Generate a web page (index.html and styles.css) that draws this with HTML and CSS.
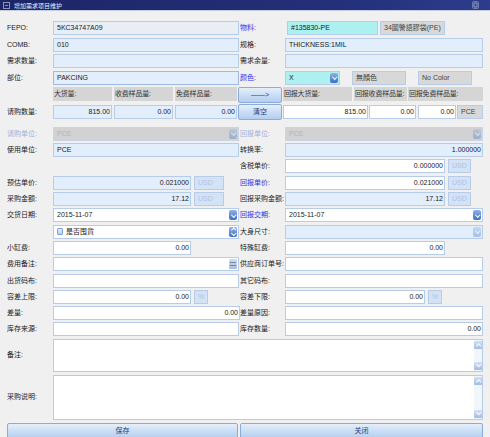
FILE: index.html
```html
<!DOCTYPE html>
<html lang="zh-CN">
<head>
    <meta charset="UTF-8">
    <title>增加需求项目维护</title>
    <link rel="stylesheet" href="styles.css">
</head>
<body>
<div class="window">
    <div class="titlebar">
        <svg class="ticon" width="7" height="7" viewBox="0 0 7 7"><rect x="0.5" y="0.5" width="6" height="6" fill="none" stroke="#8b93b8"/><path d="M2 3.5h3" stroke="#8b93b8"/></svg>
        <span class="title">增加需求项目维护</span>
        <svg class="tbtn" width="7" height="8" viewBox="0 0 7 8"><rect x="0.5" y="0.5" width="6" height="7" rx="1" fill="#3b4a8e" stroke="#6f7bb0"/><rect x="2" y="2" width="3" height="4" fill="none" stroke="#9aa3cc" stroke-width="0.8"/></svg>
    </div>

    <div class="form">
        <!-- top block -->
        <div class="row top">
            <span class="lbl">FEPO:</span>
            <div class="box fepo">5KC34747A09</div>
            <span class="lbl blue">物料:</span>
            <div class="pair">
                <div class="box cyan mat">#135830-PE</div>
                <div class="box gray grow">34圖警語膠袋(PE)</div>
            </div>
        </div>
        <div class="row top">
            <span class="lbl">COMB:</span>
            <div class="box">010</div>
            <span class="lbl">规格:</span>
            <div class="box">THICKNESS:1MIL</div>
        </div>
        <div class="row top">
            <span class="lbl">需求数量:</span>
            <div class="box"></div>
            <span class="lbl">需求余量:</span>
            <div class="box"></div>
        </div>
        <div class="row top">
            <span class="lbl">部位:</span>
            <div class="box focus">PAKCING</div>
            <span class="lbl blue">颜色:</span>
            <div class="colors">
                <div class="box cyan col-x">X<span class="ic dd"></span></div>
                <div class="box gray col-n">無顏色</div>
                <div class="box gray col-n">No Color</div>
            </div>
        </div>

        <!-- quantity block -->
        <div class="qrow head">
            <span class="lbl"></span>
            <div class="hd w59">大货量:</div>
            <div class="hd w59">收费样品量:</div>
            <div class="hd w62">免费样品量:</div>
            <div class="btn small">——&gt;</div>
            <div class="hd w69">回报大货量:</div>
            <div class="hd w53">回报收费样品量:</div>
            <div class="hd w75">回报免费样品量:</div>
        </div>
        <div class="qrow qty">
            <span class="lbl">请购数量:</span>
            <div class="box num w59">815.00</div>
            <div class="box num w59">0.00</div>
            <div class="box num w62">0.00</div>
            <div class="btn small">清空</div>
            <div class="box white num w85">815.00</div>
            <div class="box white num w47">0.00</div>
            <div class="box white num w38">0.00</div>
            <div class="box gray w26">PCE</div>
        </div>

        <!-- unit / price block -->
        <div class="row">
            <span class="lbl faded">请购单位:</span>
            <div class="box off">PCE<span class="ic dd dim"></span></div>
            <span class="lbl faded">回报单位:</span>
            <div class="box off">PCE<span class="ic dd dim"></span></div>
        </div>
        <div class="row">
            <span class="lbl">使用单位:</span>
            <div class="box">PCE</div>
            <span class="lbl">转换率:</span>
            <div class="box num">1.000000</div>
        </div>
        <div class="row">
            <span class="lbl"></span>
            <div></div>
            <span class="lbl">含税单价:</span>
            <div class="pair">
                <div class="box white num r159">0.000000</div>
                <div class="box cur grow">USD</div>
            </div>
        </div>
        <div class="row">
            <span class="lbl">预估单价:</span>
            <div class="pair">
                <div class="box num l138">0.021000</div>
                <div class="box cur usd">USD</div>
            </div>
            <span class="lbl blue">回报单价:</span>
            <div class="pair">
                <div class="box white num r159">0.021000</div>
                <div class="box cur grow">USD</div>
            </div>
        </div>
        <div class="row">
            <span class="lbl">采购金额:</span>
            <div class="pair">
                <div class="box num l138">17.12</div>
                <div class="box cur usd">USD</div>
            </div>
            <span class="lbl">回报采购金额:</span>
            <div class="pair">
                <div class="box num r159">17.12</div>
                <div class="box cur grow">USD</div>
            </div>
        </div>
        <div class="row">
            <span class="lbl">交货日期:</span>
            <div class="box white">2015-11-07<span class="ic dd"></span></div>
            <span class="lbl blue">回报交期:</span>
            <div class="box white">2015-11-07<span class="ic dd"></span></div>
        </div>
        <div class="row">
            <span class="lbl"></span>
            <div class="box white"><span class="chk"></span>是否囤貨<span class="ic spin"></span></div>
            <span class="lbl">大身尺寸:</span>
            <div class="box"><span class="ic dd dim"></span></div>
        </div>

        <!-- misc block -->
        <div class="row">
            <span class="lbl">小缸费:</span>
            <div><div class="box white num l138">0.00</div></div>
            <span class="lbl">特殊缸费:</span>
            <div><div class="box white num r159">0.00</div></div>
        </div>
        <div class="row">
            <span class="lbl">费用备注:</span>
            <div class="box white"><span class="ic dots"></span></div>
            <span class="lbl">供应商订单号:</span>
            <div class="box white"></div>
        </div>
        <div class="row">
            <span class="lbl">出货码布:</span>
            <div class="box white"></div>
            <span class="lbl">其它码布:</span>
            <div class="box white"></div>
        </div>
        <div class="row">
            <span class="lbl">容差上限:</span>
            <div class="pair">
                <div class="box white num l138">0.00</div>
                <div class="box cur grow">%</div>
            </div>
            <span class="lbl">容差下限:</span>
            <div class="pair">
                <div class="box white num r139">0.00</div>
                <div class="box cur grow">%</div>
            </div>
        </div>
        <div class="row">
            <span class="lbl">差量:</span>
            <div class="box white num wide">0.00</div>
            <span class="lbl">差量原因:</span>
            <div class="box white"></div>
        </div>
        <div class="row">
            <span class="lbl">库存来源:</span>
            <div class="box white"></div>
            <span class="lbl">库存数量:</span>
            <div class="box white num">0.00</div>
        </div>

        <!-- notes -->
        <div class="note n1">
            <span class="lbl">备注:</span>
            <div class="area"><div class="sb"><span class="ic up"></span><span class="ic dn"></span></div></div>
        </div>
        <div class="note n2">
            <span class="lbl">采购说明:</span>
            <div class="area"><div class="sb"><span class="ic up"></span><span class="ic dn"></span></div></div>
        </div>

        <div class="actions">
            <div class="btn">保存</div>
            <div class="btn">关闭</div>
        </div>
    </div>
</div>
</body>
</html>
```

FILE: styles.css
```css
* {
    box-sizing: border-box;
}
body {
    margin: 0;
    background-color: #f0f0f0;
    font-family: "Liberation Sans", "Noto Sans CJK SC", sans-serif;
    font-size: 7px;
    color: #1a1a1a;
}
.window {
    width: 490px;
    height: 437px;
    overflow: hidden;
    background-color: #f0f0f0;
}
.titlebar {
    height: 11px;
    display: flex;
    align-items: center;
    padding: 0 3px;
    background: linear-gradient(to right, #1c2566, #24307a 70%, #2d3c8c);
    border-bottom: 1px solid #c5cddc;
    color: #e8ecf8;
    font-size: 6px;
}
.ticon {
    margin-right: 4px;
}
.title {
    flex: 1;
}
.tbtn {
    margin-right: 8px;
}
.form {
    padding: 10px 7px 0 7px;
}

/* rows */
.row {
    display: grid;
    grid-template-columns: 46px 187px 45px 198px;
    height: 14px;
    margin-bottom: 2.3px;
}
.row.top {
    margin-bottom: 2.6px;
}
.row > .box:nth-child(2) {
    width: 186px;
}
.lbl {
    line-height: 14px;
    white-space: nowrap;
}
.blue {
    color: #2e32e6;
}
.faded {
    color: #a3b1dc;
}
.qrow {
    display: flex;
    height: 14px;
}
.qrow > .lbl {
    width: 46px;
    flex: none;
}
.head {
    margin-bottom: 4px;
}
.qty {
    margin-bottom: 7.5px;
}
.pair {
    display: flex;
    gap: 3px;
}
.grow {
    flex: 1;
}

/* fields */
.box {
    position: relative;
    height: 14px;
    border: 1px solid #b7cce9;
    background-color: #e2eefb;
    padding: 0 3px;
    line-height: 12px;
    white-space: nowrap;
    overflow: hidden;
    flex: none;
}
.fepo {
    background-color: #e9eef5;
}
.focus {
    border-color: #9fbbe3;
}
.white {
    background-color: #ffffff;
}
.cyan {
    background-color: #adf0f0;
}
.gray {
    background-color: #d8d8d8;
    color: #444;
}
.off {
    background-color: #d2d2d2;
    color: #b5b5b5;
    border-color: #c8d4e6;
}
.cur {
    background-color: #d3e2f5;
    color: #aec3e3;
}
.num {
    text-align: right;
    padding-right: 1px;
}
.mat {
    width: 91px;
    margin-left: 2px;
}
.pair .mat + .box {
    margin-left: -1px;
}
.colors {
    display: flex;
    gap: 12px;
}
.col-x {
    width: 55px;
}
.col-n {
    width: 54px;
}
.l138 {
    width: 138px;
}
.usd {
    width: 30px;
}
.r159 {
    width: 160px;
}
.r139 {
    width: 140px;
}
.wide {
    width: 187px !important;
}
.w26 { width: 26px; }
.w38 { width: 38px; margin-right: 1px; }
.w47 { width: 47px; margin-right: 2px; }
.w53 { width: 53px; margin-right: 1px; }
.w59 { width: 59px; margin-right: 2px; }
.w62 { width: 62px; margin-right: 1px; }
.w69 { width: 69px; margin-right: 2px; }
.w75 { width: 75px; }
.w85 { width: 85px; margin-right: 1px; }

.hd {
    flex: none;
    height: 14px;
    background-color: #d5d5d5;
    color: #333;
    padding-left: 1px;
    line-height: 14px;
    white-space: nowrap;
    overflow: hidden;
    letter-spacing: -0.2px;
}

/* buttons */
.btn {
    height: 16px;
    border: 1px solid #8eabd8;
    border-radius: 2px;
    background: linear-gradient(#e6effb, #c9dcf4 55%, #b4cdef);
    color: #22407c;
    text-align: center;
    line-height: 14px;
}
.btn.small {
    flex: none;
    width: 44px;
    height: 16px;
    margin-right: 1px;
    margin-top: -1px;
}
.head .btn.small {
    margin-top: 0;
}

/* icons */
.ic {
    position: absolute;
    display: block;
}
.dd {
    right: 1px;
    top: 1px;
    width: 8px;
    height: 10px;
    border-radius: 2px;
    background: linear-gradient(#8fb2e6, #3e6fc4);
}
.dd::after {
    content: "";
    position: absolute;
    left: 2.5px;
    top: 2.5px;
    width: 2.5px;
    height: 2.5px;
    border-right: 1px solid #fff;
    border-bottom: 1px solid #fff;
    transform: rotate(45deg);
}
.dim {
    opacity: 0.35;
}
.spin {
    right: 1px;
    top: 1px;
    width: 8px;
    height: 10px;
    border-radius: 2px;
    background: linear-gradient(#8fb2e6, #3e6fc4);
}
.spin::before,
.spin::after {
    content: "";
    position: absolute;
    left: 2.5px;
    width: 2.5px;
    height: 2.5px;
    border-left: 1px solid #fff;
    border-top: 1px solid #fff;
}
.spin::before {
    top: 1.5px;
    transform: rotate(45deg);
}
.spin::after {
    top: 5px;
    transform: rotate(225deg);
}
.dots {
    right: 1px;
    top: 1px;
    width: 8px;
    height: 10px;
    border-radius: 1px;
    background: linear-gradient(#d2deee, #a9bcd8);
}
.dots::after {
    content: "";
    position: absolute;
    left: 1px;
    right: 1px;
    top: 3px;
    height: 2px;
    border-top: 1px solid #6f86ac;
    border-bottom: 1px solid #6f86ac;
}
.chk {
    display: inline-block;
    width: 6px;
    height: 7px;
    margin: 0 3px -1px 0;
    border: 1px solid #7fa2d8;
    border-radius: 1px;
    background: linear-gradient(#dfeafa, #b9d0f0);
}

/* notes */
.note {
    display: grid;
    grid-template-columns: 46px 430px;
}
.note .lbl {
    align-self: center;
}
.n1 {
    height: 33px;
    margin-top: 0.3px;
    margin-bottom: 3px;
}
.n2 {
    height: 45px;
    margin-bottom: 3px;
}
.area {
    position: relative;
    border: 1px solid #b7cce9;
    background-color: #ffffff;
}
.sb {
    position: absolute;
    right: 0;
    top: 0;
    bottom: 0;
    width: 8px;
    background-color: #f2f6fb;
}
.up,
.dn {
    left: 0;
    width: 8px;
    height: 8px;
    border-radius: 1px;
    background: linear-gradient(#cfe0f6, #9ebde8);
}
.up { top: 1px; }
.dn { bottom: 1px; }
.up::after,
.dn::after {
    content: "";
    position: absolute;
    left: 2.5px;
    width: 2.5px;
    height: 2.5px;
    border-left: 1px solid #fff;
    border-top: 1px solid #fff;
}
.up::after {
    top: 3px;
    transform: rotate(45deg);
}
.dn::after {
    top: 1.5px;
    transform: rotate(225deg);
}

.actions {
    display: grid;
    grid-template-columns: 231px 243px;
    gap: 2px;
}
```
